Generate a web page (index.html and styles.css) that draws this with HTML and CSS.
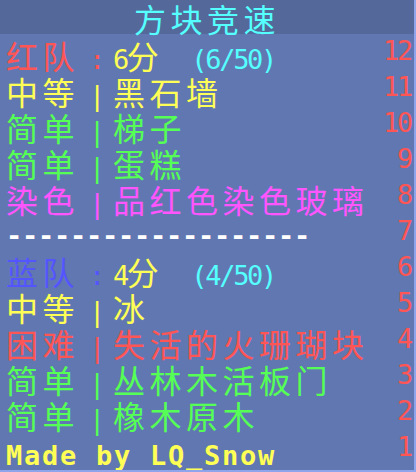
FILE: index.html
```html
<!DOCTYPE html>
<html lang="zh">
<head>
<meta charset="utf-8">
<title>方块竞速</title>
<link rel="stylesheet" href="styles.css">
</head>
<body>
<div class="board">
  <div class="title">方块竞速</div>
  <div class="rows">
    <div class="row"><span class="line"><span class="red">红队</span><span class="lat red"> : </span><span class="yellow"><span class="lat">6</span>分</span><span class="lat cyan frac">  (6/50)</span></span><span class="lat score">12</span></div>
    <div class="row yellow"><span class="line">中等<span class="lat"> | </span>黑石墙</span><span class="lat score">11</span></div>
    <div class="row green"><span class="line">简单<span class="lat"> | </span>梯子</span><span class="lat score">10</span></div>
    <div class="row green"><span class="line">简单<span class="lat"> | </span>蛋糕</span><span class="lat score">9</span></div>
    <div class="row magenta"><span class="line">染色<span class="lat"> | </span>品红色染色玻璃</span><span class="lat score">8</span></div>
    <div class="row white"><span class="line"><span class="lat dash">-------------------</span></span><span class="lat score">7</span></div>
    <div class="row"><span class="line"><span class="blue">蓝队</span><span class="lat blue"> : </span><span class="yellow"><span class="lat">4</span>分</span><span class="lat cyan frac">  (4/50)</span></span><span class="lat score">6</span></div>
    <div class="row yellow"><span class="line">中等<span class="lat"> | </span>冰</span><span class="lat score">5</span></div>
    <div class="row red"><span class="line">困难<span class="lat"> | </span>失活的火珊瑚块</span><span class="lat score">4</span></div>
    <div class="row green"><span class="line">简单<span class="lat"> | </span>丛林木活板门</span><span class="lat score">3</span></div>
    <div class="row green"><span class="line">简单<span class="lat"> | </span>橡木原木</span><span class="lat score">2</span></div>
    <div class="row yellow"><span class="line"><span class="lat bold">Made by LQ_Snow</span></span><span class="lat score">1</span></div>
  </div>
</div>
</body>
</html>
```
FILE: styles.css
```css
html {
  background: #8ea5ec;
  height: 472px;
}
body {
  margin: 0;
}
.board {
  width: 414px;
  height: 470px;
  background: #6177b1;
  font-family: "Noto Sans CJK SC", sans-serif;
  font-size: 32px;
  letter-spacing: 4.5px;
  overflow: hidden;
}
.title {
  background: #546899;
  height: 34px;
  line-height: 36px;
  text-align: center;
  color: #55ffff;
  white-space: nowrap;
}
.rows {
  padding-top: 3px;
}
.row {
  display: flex;
  justify-content: space-between;
  height: 36px;
  line-height: 36px;
  padding: 0 3px 0 6px;
  white-space: nowrap;
}
.lat {
  font-family: "DejaVu Sans Mono", monospace;
  font-size: 27px;
  letter-spacing: -2.3px;
  word-spacing: -4px;
  line-height: 1;
  white-space: pre;
}
.frac {
  margin-left: 8px;
}
.dash {
  letter-spacing: -0.25px;
  word-spacing: 0;
  vertical-align: 4px;
  font-weight: bold;
}
.bold {
  font-weight: bold;
  letter-spacing: 1.75px;
  word-spacing: 0;
}
.score {
  color: #ff5555;
}
.red { color: #ff5555; }
.yellow { color: #ffff55; }
.green { color: #55ff55; }
.magenta { color: #ff55ff; }
.cyan { color: #55ffff; }
.blue { color: #5555ff; }
.white { color: #ffffff; }
```
